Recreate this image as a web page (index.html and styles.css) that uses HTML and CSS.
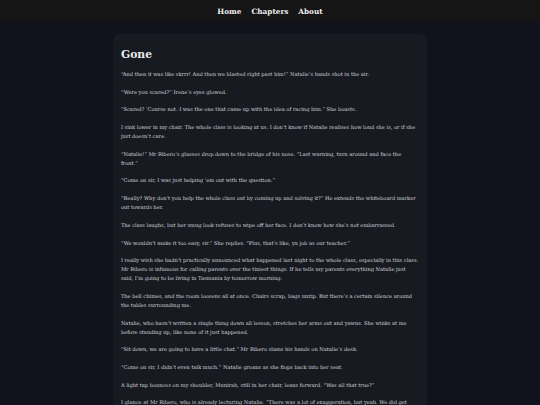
FILE: index.html
```html
<!DOCTYPE html>
<html>
<head>
<meta charset="utf-8">
<link rel="stylesheet" href="styles.css">
</head>
<body>
<header class="topbar">
  <nav class="nav">
    <a href="#">Home</a>
    <a href="#">Chapters</a>
    <a href="#">About</a>
  </nav>
</header>
<main class="page">
  <article class="card">
    <h1 class="title">Gone</h1>
    <p>“And then it was like skrrr! And then we blasted right past him!” Natalie’s hands shot in the air.</p>
    <p>“Were you scared?” Irene’s eyes glowed.</p>
    <p>“Scared? ’Course not. I was the one that came up with the idea of racing him.” She boasts.</p>
    <p>I sink lower in my chair. The whole class is looking at us. I don’t know if Natalie realises how loud she is, or if she just doesn’t care.</p>
    <p>“Natalie!” Mr Ribero’s glasses drop down to the bridge of his nose. “Last warning, turn around and face the front.”</p>
    <p>“Come on sir, I was just helping ’em out with the question.”</p>
    <p>“Really? Why don’t you help the whole class out by coming up and solving it?” He extends the whiteboard marker out towards her.</p>
    <p>The class laughs, but her smug look refuses to wipe off her face. I don’t know how she’s not embarrassed.</p>
    <p>“We wouldn’t make it too easy, sir.” She replies. “Plus, that’s like, ya job as our teacher.”</p>
    <p>I really wish she hadn’t practically announced what happened last night to the whole class, especially in this class. Mr Ribero is infamous for calling parents over the tiniest things. If he tells my parents everything Natalie just said, I’m going to be living in Tasmania by tomorrow morning.</p>
    <p>The bell chimes, and the room loosens all at once. Chairs scrap, bags unzip. But there’s a certain silence around the tables surrounding me.</p>
    <p>Natalie, who hasn’t written a single thing down all lesson, stretches her arms out and yawns. She winks at me before standing up, like none of it just happened.</p>
    <p>“Sit down, we are going to have a little chat.” Mr Ribero slams his hands on Natalie’s desk.</p>
    <p>“Come on sir, I didn’t even talk much.” Natalie groans as she flops back into her seat.</p>
    <p>A light tap bounces on my shoulder, Munirah, still in her chair, leans forward. “Was all that true?”</p>
    <p>I glance at Mr Ribero, who is already lecturing Natalie. “There was a lot of exaggeration, but yeah. We did get caught in the end.”</p>
  </article>
</main>
</body>
</html>
```
FILE: styles.css
```css
html, body {
  margin: 0;
  padding: 0;
}
body {
  background: #11121b;
  font-family: "DejaVu Serif", serif;
  color: #d2d3d6;
  height: 405px;
  overflow: hidden;
}
.topbar {
  background: #151515;
  height: 22px;
  display: flex;
  align-items: center;
  justify-content: center;
}
.nav {
  display: flex;
  gap: 10px;
}
.nav a {
  color: #f0f0f0;
  text-decoration: none;
  font-weight: bold;
  font-size: 7.3px;
}
.page {
  display: flex;
  justify-content: center;
  padding-top: 12px;
}
.card {
  width: 298.2px;
  background: #181a22;
  border-radius: 7px;
  padding: 12px 8px 20px 8px;
}
.title {
  margin: 0 0 7px 0;
  font-size: 10.8px;
  font-weight: bold;
  color: #ebebeb;
  line-height: 17px;
}
.card p {
  margin: 0 0 8.7px 0;
  font-size: 5.1px;
  line-height: 9px;
}
```
